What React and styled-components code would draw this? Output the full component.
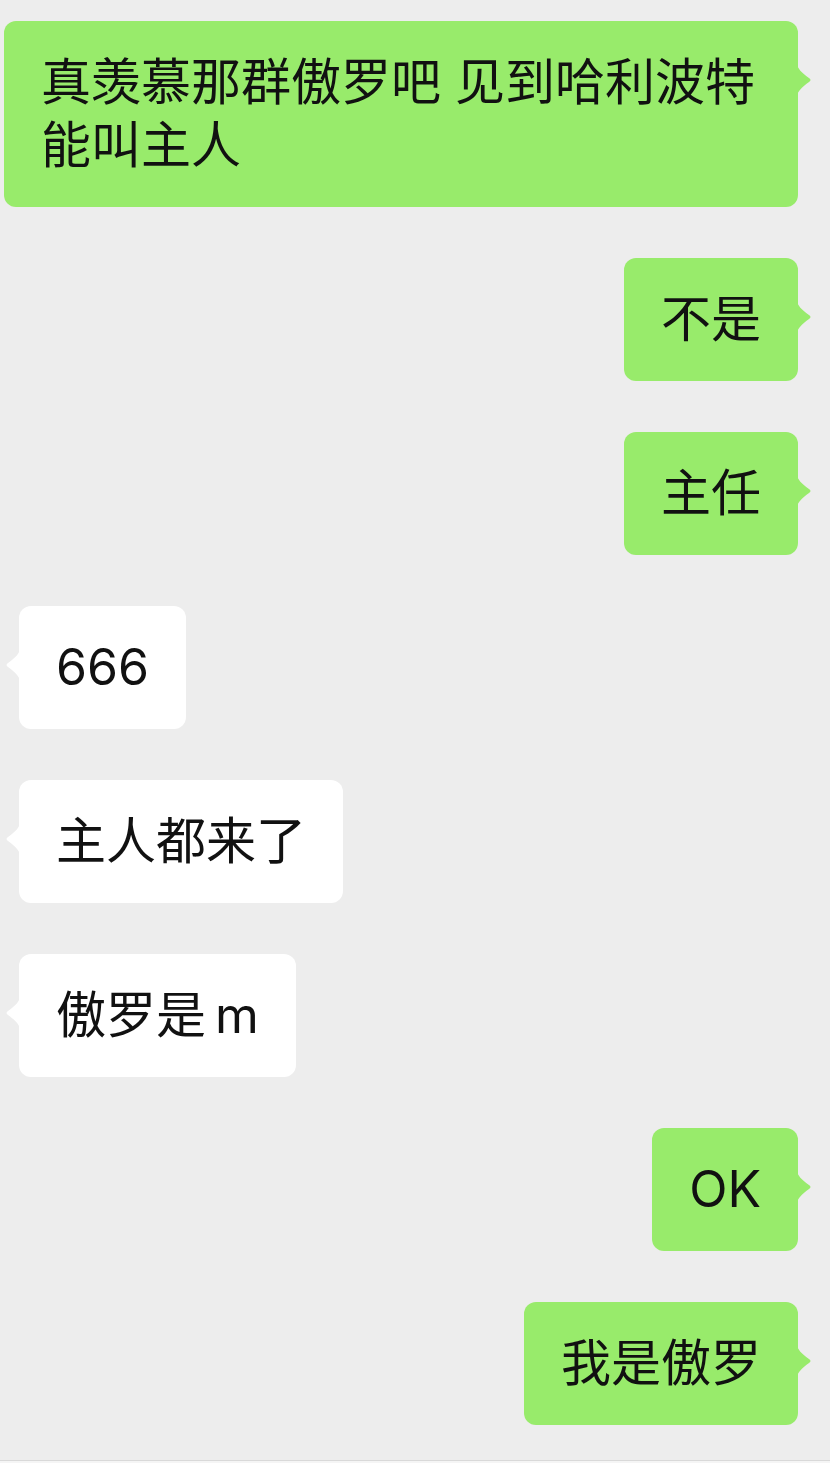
import React from "react";
import styled, { createGlobalStyle, css } from "styled-components";

const GlobalStyle = createGlobalStyle`
  html, body {
    margin: 0;
    padding: 0;
    background: #ededed;
  }
  * { box-sizing: border-box; }
`;

const Page = styled.div`
  width: 830px;
  height: 1463px;
  display: flex;
  flex-direction: column;
  background: #ededed;
  font-family: Inter, "Noto Sans CJK SC", "Noto Sans", sans-serif;
  overflow: hidden;
`;

const Messages = styled.div`
  flex: 1;
  display: flex;
  flex-direction: column;
  gap: 51px;
  padding-top: 21px;
`;

const Divider = styled.div`
  height: 1px;
  background: #d9d9d9;
`;

const Footer = styled.div`
  height: 2px;
  background: #f5f5f5;
`;

const Row = styled.div`
  display: flex;
  ${(p) =>
    p.$mine
      ? css`
          justify-content: flex-end;
          padding: 0 32px 0 4px;
        `
      : css`
          justify-content: flex-start;
          padding: 0 32px 0 19px;
        `}
`;

const Bubble = styled.div`
  position: relative;
  max-width: 100%;
  padding: 30px 37px;
  border-radius: 12px;
  font-size: 50px;
  line-height: 63px;
  color: #111;
  background: ${(p) => (p.$mine ? "#98eb6b" : "#ffffff")};
  word-break: break-all;
`;

const TailSvg = styled.svg`
  position: absolute;
  top: 43px;
  width: 15px;
  height: 32px;
  ${(p) =>
    p.$mine
      ? css`
          right: -14px;
        `
      : css`
          left: -14px;
          transform: scaleX(-1);
        `}
`;

function Tail({ mine }) {
  return (
    <TailSvg $mine={mine} viewBox="0 0 15 32" aria-hidden="true">
      <path
        d="M0 0 C1 5 4 8 12 14 Q15 16 12 18 C4 24 1 27 0 32 Z"
        fill={mine ? "#98eb6b" : "#ffffff"}
      />
    </TailSvg>
  );
}

const messages = [
  { mine: true, text: "真羡慕那群傲罗吧 见到哈利波特能叫主人" },
  { mine: true, text: "不是" },
  { mine: true, text: "主任" },
  { mine: false, text: "666" },
  { mine: false, text: "主人都来了" },
  { mine: false, text: "傲罗是\u2009m" },
  { mine: true, text: "OK" },
  { mine: true, text: "我是傲罗" },
];

export default function App() {
  return (
    <>
      <GlobalStyle />
      <Page>
        <Messages>
          {messages.map((m, i) => (
            <Row key={i} $mine={m.mine}>
              <Bubble $mine={m.mine}>
                {m.text}
                <Tail mine={m.mine} />
              </Bubble>
            </Row>
          ))}
        </Messages>
        <Divider />
        <Footer />
      </Page>
    </>
  );
}
